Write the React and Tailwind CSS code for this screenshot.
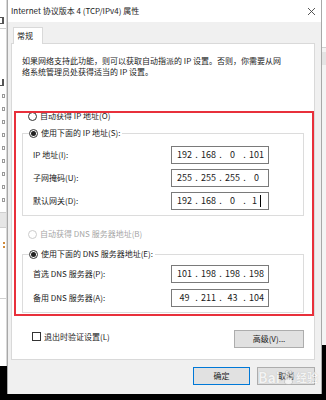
import React from 'react';

const font = { fontFamily: '"Noto Sans CJK SC", "Noto Sans", sans-serif' };

const Radio = ({ checked, disabled, label }) => (
  <div className="flex items-center h-[14px] gap-[3px]">
    <span
      className={`w-[9px] h-[9px] rounded-full border bg-white flex items-center justify-center ${
        disabled ? 'border-[#cccccc]' : 'border-[#333333]'
      }`}
    >
      {checked && <span className="w-[5px] h-[5px] rounded-full bg-[#222222]" />}
    </span>
    <span className={`text-[8px] whitespace-nowrap ${disabled ? 'text-[#a6a6a6]' : 'text-[#1a1a1a]'}`}>
      {label}
    </span>
  </div>
);

const IpBox = ({ parts, caret }) => (
  <div className="w-[98px] h-[18px] border border-[#7a7a7a] bg-white flex items-center pl-[3px] text-[9px] text-[#1a1a1a]">
    {parts.map((p, i) => (
      <React.Fragment key={i}>
        {i > 0 && <span className="w-[5px] text-center">.</span>}
        <span className="w-[19px] text-center flex items-center justify-center">
          {p}
          {caret && i === 3 && <span className="inline-block w-px h-[12px] bg-black ml-[3px]" />}
        </span>
      </React.Fragment>
    ))}
  </div>
);

const Row = ({ label, parts, caret }) => (
  <div className="flex items-center h-[18px]">
    <span className="w-[138px] text-[8px] text-[#1a1a1a] whitespace-nowrap">{label}</span>
    <IpBox parts={parts} caret={caret} />
  </div>
);

const Group = ({ legend, children, className }) => (
  <fieldset className={`mx-[10px] border border-[#dcdcdc] pl-[10px] ${className}`}>
    <legend className="-ml-[4px] pr-[2px]">
      <Radio checked label={legend} />
    </legend>
    <div className="flex flex-col">{children}</div>
  </fieldset>
);

const Btn = ({ children, focus, className }) => (
  <div
    className={`h-[18px] flex items-center justify-center bg-[#e1e1e1] text-[8px] text-[#1a1a1a] border ${
      focus ? 'border-[#0078d7]' : 'border-[#adadad]'
    } ${className}`}
  >
    {children}
  </div>
);

export default function App() {
  return (
    <div className="w-[326px] h-[400px] overflow-hidden flex bg-black" style={font}>
      {/* background window on the left */}
      <div className="w-[7px] h-full flex flex-col">
        <div className="h-[366px] bg-white border-r border-[#d8d8d8] flex flex-col">
          <div className="h-[29px] border-b border-[#d0d0d0] flex items-end pb-[4px]">
            <span className="w-[4px] h-[7px] border-r-2 border-y border-[#555]" />
          </div>
          <div className="mt-[50px] w-[4px] h-[7px] border-r-2 border-b border-[#555]" />
          <div className="mt-[8px] flex flex-col gap-[9px] pl-[2px]">
            {[0, 1, 2, 3, 4, 5, 6, 7, 8].map(i => (
              <span key={i} className="w-[3px] h-[4px] border border-[#9a9a9a]" />
            ))}
          </div>
          <div className="mt-[10px] h-[16px] bg-[#e6e6e6] border-y border-[#d0d0d0]" />
          <div className="mt-[14px] ml-[3px] w-[2px] h-[6px] border-l-2 border-dotted border-[#d08a3a]" />
          <div className="mt-[50px] border-t border-[#d0d0d0]" />
        </div>
      </div>

      {/* dialog */}
      <div className="relative w-[315px] h-[394px] border-x border-[#a8a8a8] bg-[#f0f0f0] flex flex-col">
        <div className="h-[22px] bg-white flex items-center justify-between pl-[3px] pr-[5px]">
          <span className="text-[8px] text-[#222] whitespace-nowrap">Internet 协议版本 4 (TCP/IPv4) 属性</span>
          <svg width="9" height="9" viewBox="0 0 9 9">
            <path d="M1 1L8 8M8 1L1 8" stroke="#444" strokeWidth="0.9" />
          </svg>
        </div>

        <div className="pl-[3px] pr-[6px] pt-[5px] flex flex-col">
          <div className="ml-[2px] w-[30px] h-[17px] -mb-px relative z-10 bg-white border-x border-t border-[#d9d9d9] flex items-center pl-[3px]">
            <span className="text-[8px] text-[#1a1a1a]">常规</span>
          </div>

          <div className="relative h-[317px] bg-white border border-[#d9d9d9] flex flex-col">
            <p className="pl-[10px] pt-[11px] text-[8px] leading-[11px] text-[#1a1a1a] whitespace-nowrap">
              如果网络支持此功能，则可以获取自动指派的 IP 设置。否则，你需要从网
              <br />
              络系统管理员处获得适当的 IP 设置。
            </p>

            <div className="ml-[16px] mt-[32px]">
              <Radio label="自动获得 IP 地址(O)" />
            </div>

            <Group legend="使用下面的 IP 地址(S):" className="mt-[3px] pt-[6px] pb-[5px]">
              <div className="flex flex-col gap-[5px]">
                <Row label="IP 地址(I):" parts={['192', '168', '0', '101']} />
                <Row label="子网掩码(U):" parts={['255', '255', '255', '0']} />
                <Row label="默认网关(D):" parts={['192', '168', '0', '1']} caret />
              </div>
            </Group>

            <div className="ml-[16px] mt-[11px]">
              <Radio disabled label="自动获得 DNS 服务器地址(B)" />
            </div>

            <Group legend="使用下面的 DNS 服务器地址(E):" className="mt-[6px] pt-[4px] pb-[5px]">
              <div className="flex flex-col gap-[6px]">
                <Row label="首选 DNS 服务器(P):" parts={['101', '198', '198', '198']} />
                <Row label="备用 DNS 服务器(A):" parts={['49', '211', '43', '104']} />
              </div>
            </Group>

            <div className="mt-[17px] pl-[20px] pr-[10px] flex items-center justify-between">
              <div className="flex items-center gap-[3px] -mt-[5px]">
                <span className="w-[9px] h-[9px] border border-[#333] bg-white" />
                <span className="text-[8px] text-[#1a1a1a]">退出时验证设置(L)</span>
              </div>
              <Btn className="w-[70px]">高级(V)...</Btn>
            </div>

            {/* red annotation frame */}
            <div className="absolute left-[2px] top-[67px] w-[300px] h-[205px] border-2 border-[#e8303b] pointer-events-none" />
          </div>

          <div className="mt-[7px] flex justify-end gap-[7px]">
            <Btn focus className="w-[57px]">确定</Btn>
            <Btn className="w-[58px]">取消</Btn>
          </div>
        </div>

        {/* watermark */}
        <div className="absolute left-[250px] top-[367px] flex items-center gap-[1px] text-[14px] font-bold text-white opacity-60 [text-shadow:0_0_1px_#9a9a9a] pointer-events-none">
          <span>Bai</span>
          <svg width="14" height="16" viewBox="0 0 14 16">
            <g fill="white" stroke="#9a9a9a" strokeWidth="0.6">
              <ellipse cx="3" cy="5" rx="1.6" ry="2" />
              <ellipse cx="6" cy="2.5" rx="1.6" ry="2" />
              <ellipse cx="9.5" cy="2.8" rx="1.6" ry="2" />
              <ellipse cx="11.5" cy="6" rx="1.5" ry="1.9" />
              <path d="M3.5 12c0-3 2.5-5 4-5s4 2 4 5c0 2-2 2.5-4 2.5s-4-.5-4-2.5z" />
            </g>
          </svg>
          <span className="text-[11px]">经验</span>
        </div>
      </div>

      {/* background window on the right */}
      <div className="w-[4px] h-full flex flex-col">
        <div className="h-[345px] bg-[#f4f4f4] flex flex-col">
          <div className="h-[48px] border-b border-[#d0d0d0] bg-white" />
          <div className="mt-[4px] h-[13px] bg-[#e4e4e4]" />
        </div>
      </div>
    </div>
  );
}
